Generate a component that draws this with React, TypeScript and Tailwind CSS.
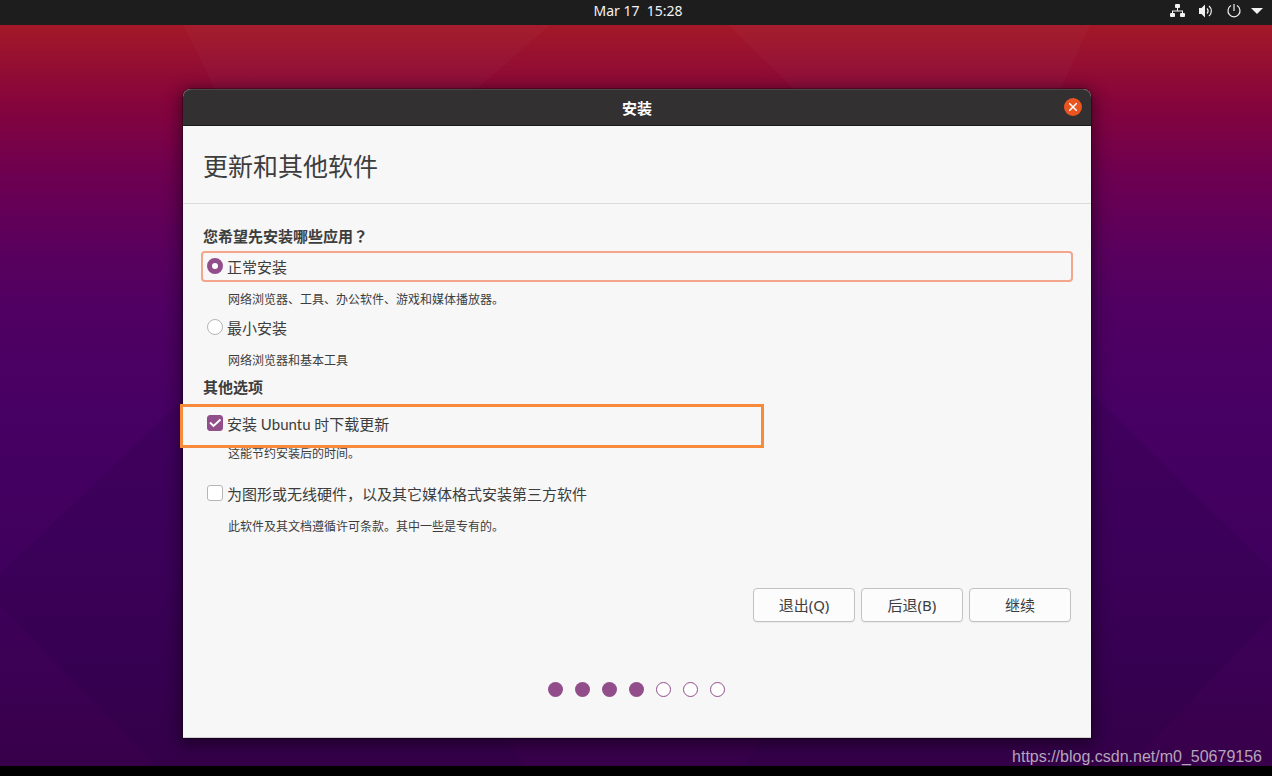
import { useState, type ReactNode } from "react";

const cjk = "font-['Noto_Sans','Noto_Sans_CJK_SC',sans-serif]";

function Wallpaper() {
  return (
    <svg
      aria-hidden="true"
      className="absolute inset-0 h-full w-full"
      viewBox="0 0 1272 741"
      preserveAspectRatio="none"
    >
      <defs>
        <linearGradient id="sky" x1="0" y1="0" x2="0" y2="1">
          <stop offset="0" stopColor="#a31828" />
          <stop offset="0.05" stopColor="#950f31" />
          <stop offset="0.1" stopColor="#87053b" />
          <stop offset="0.2" stopColor="#6e0050" />
          <stop offset="0.3" stopColor="#5a005d" />
          <stop offset="0.38" stopColor="#500062" />
          <stop offset="0.52" stopColor="#470063" />
          <stop offset="0.72" stopColor="#40005d" />
          <stop offset="0.88" stopColor="#3b0053" />
          <stop offset="1" stopColor="#38004a" />
        </linearGradient>
      </defs>
      <rect width="1272" height="741" fill="url(#sky)" />
      <path d="M183 0H550L470 70H218Z" fill="#ffffff" fillOpacity="0.025" />
      <path d="M728 0H1090L1058 70H800Z" fill="#ffffff" fillOpacity="0.025" />
      <path d="M0 549L200 358V741H157L0 581Z" fill="#1b0040" fillOpacity="0.14" />
      <path d="M1272 545L1080 357V741H1128L1272 592Z" fill="#1b0040" fillOpacity="0.14" />
      <path d="M200 700H500L524 741H200Z" fill="#1b0040" fillOpacity="0.14" />
      <path d="M770 700H1080V741H745Z" fill="#1b0040" fillOpacity="0.14" />
    </svg>
  );
}

function TopBar() {
  return (
    <header className="grid h-[25px] grid-cols-[1fr_auto_1fr] items-center bg-[#1d1d1d] pb-1 text-[#f2f2f2]">
      <span />
      <time className="pl-1 font-['Noto_Sans',sans-serif] text-sm leading-5 whitespace-pre">Mar 17  15:28</time>
      <div className="flex items-center justify-end gap-[9px] pr-[9px]">
        <div className="flex items-center gap-3">
          <svg width="16" height="16" viewBox="0 0 16 16" fill="currentColor" aria-label="网络" role="img">
            <rect x="5" y="1" width="5" height="4" rx="1" />
            <rect x="0" y="10" width="5" height="4" rx="1" />
            <rect x="10" y="10" width="5" height="4" rx="1" />
            <path d="M7 5h1v2.500h5V10h-1V8.500H3V10H2V7.500h5z" />
          </svg>
          <svg width="16" height="16" viewBox="0 0 16 16" fill="none" stroke="currentColor" aria-label="音量" role="img">
            <path d="M1 5h2.500L7 1.500v13L3.500 11H1z" fill="currentColor" stroke="none" />
            <path d="M9 5.500a3.500 3.500 0 0 1 0 5" strokeWidth="1.300" />
            <path d="M11 3a6.500 6.500 0 0 1 0 10" strokeWidth="1.200" />
          </svg>
          <svg width="16" height="16" viewBox="0 0 16 16" fill="none" stroke="currentColor" strokeWidth="1.200" aria-label="电源" role="img">
            <path d="M5 2.600a6 6 0 1 0 6 0M8 1v7" />
          </svg>
        </div>
        <svg width="12" height="6" viewBox="0 0 12 6" fill="currentColor" aria-hidden="true">
          <path d="M0 0h12L6 6z" />
        </svg>
      </div>
    </header>
  );
}

function Description({ children }: { children: ReactNode }) {
  return <p className="pl-[27px] text-xs leading-5">{children}</p>;
}

function RadioOption({ label, checked, onSelect }: { label: string; checked: boolean; onSelect: () => void }) {
  return (
    <label
      className={
        checked
          ? "flex h-[31px] items-center gap-1 rounded border-2 border-[#f3a68c] px-1"
          : "flex h-[31px] items-center gap-1 rounded border-2 border-transparent px-1"
      }
    >
      <input
        type="radio"
        name="apps"
        checked={checked}
        onChange={onSelect}
        className="mb-0.5 size-4 appearance-none rounded-full border border-[#b8b5b2] bg-white outline-none checked:border-[5px] checked:border-[#924d8b]"
      />
      <span>{label}</span>
    </label>
  );
}

function CheckOption({
  label,
  checked,
  onToggle,
  highlighted,
}: {
  label: ReactNode;
  checked: boolean;
  onToggle: () => void;
  highlighted?: boolean;
}) {
  return (
    <div className="relative">
      <label className="flex h-[31px] items-center gap-1 px-1.5">
        <span className="mb-0.5 grid">
          <input
            type="checkbox"
            checked={checked}
            onChange={onToggle}
            className="col-start-1 row-start-1 size-4 appearance-none rounded-[3px] border border-[#b8b5b2] bg-white checked:border-[#924d8b] checked:bg-[#924d8b]"
          />
          {checked && (
            <svg className="pointer-events-none col-start-1 row-start-1 size-4" viewBox="0 0 16 16" fill="none" stroke="#fff" strokeWidth="1.900">
              <path d="M3 7.500l3.500 3.500L13.500 4.500" />
            </svg>
          )}
        </span>
        <span>{label}</span>
      </label>
      {highlighted && (
        <div className="pointer-events-none absolute -top-1 -left-[21px] h-[44px] w-[584px] max-w-full border-[3px] border-[#f88a3b]" />
      )}
    </div>
  );
}

function DialogButton({ children }: { children: ReactNode }) {
  return (
    <button
      type="button"
      className="h-[34px] w-[102px] rounded border border-[#c4c2c0] bg-[#fcfcfc] shadow-[0_1px_1px_rgba(0,0,0,0.06)]"
    >
      {children}
    </button>
  );
}

function InstallerWindow() {
  const [apps, setApps] = useState("normal");
  const [updates, setUpdates] = useState(true);
  const [thirdParty, setThirdParty] = useState(false);
  const steps = 7;
  const current = 4;

  return (
    <section className="w-full max-w-[908px] rounded-t-lg bg-[#f7f7f7] text-[15px] leading-5 text-[#3d3d3d] shadow-[0_3px_16px_3px_rgba(0,0,0,0.45),0_0_0_1px_rgba(0,0,0,0.3)]">
      <div className="grid h-[37px] grid-cols-[1fr_auto_1fr] items-center rounded-t-lg border-t border-b border-t-[#4a4848] border-b-[#1c1b1b] bg-[#323030] px-[9px] pb-0.5">
        <span />
        <h1 className="pt-0.5 font-bold text-white">安装</h1>
        <button type="button" aria-label="关闭" className="flex size-[18px] items-center justify-center justify-self-end rounded-full bg-[#e95420]">
          <svg width="8" height="8" viewBox="0 0 8 8" stroke="#fff" strokeWidth="1.500" aria-hidden="true">
            <path d="M0 0l8 8M8 0l-8 8" />
          </svg>
        </button>
      </div>
      <div className="flex h-[78px] items-center border-b border-[#dcdcdc] px-5 pt-0.5">
        <h2 className="text-[25px] leading-9">更新和其他软件</h2>
      </div>
      <form className="border-b border-[#d5d0cd] px-[18px] pt-[22px] pb-10" onSubmit={(e) => e.preventDefault()}>
        <h3 className="pl-0.5 font-bold">
          您希望先安装哪些应用<span lang="zh-TW" className="font-['Noto_Sans_CJK_TC',sans-serif] leading-none">？</span>
        </h3>
        <div className="mt-[5px] flex flex-col gap-2">
          <RadioOption label="正常安装" checked={apps === "normal"} onSelect={() => setApps("normal")} />
          <Description>网络浏览器、工具、办公软件、游戏和媒体播放器。</Description>
        </div>
        <div className="mt-0.5 flex flex-col gap-2">
          <RadioOption label="最小安装" checked={apps === "minimal"} onSelect={() => setApps("minimal")} />
          <Description>网络浏览器和基本工具</Description>
        </div>
        <h3 className="mt-1.5 pl-0.5 font-bold">其他选项</h3>
        <div className="mt-[11px] flex flex-col gap-[5px]">
          <CheckOption
            label={
              <>
                安装<span className="font-['Lato',sans-serif] leading-none"> Ubuntu </span>时下载更新
              </>
            }
            checked={updates}
            onToggle={() => setUpdates(!updates)}
            highlighted
          />
          <Description>这能节约安装后的时间。</Description>
        </div>
        <div className="mt-3.5 flex flex-col gap-2">
          <CheckOption
            label="为图形或无线硬件，以及其它媒体格式安装第三方软件"
            checked={thirdParty}
            onToggle={() => setThirdParty(!thirdParty)}
          />
          <Description>此软件及其文档遵循许可条款。其中一些是专有的。</Description>
        </div>
        <div className="mt-[51px] flex justify-end gap-1.5 pr-0.5">
          <DialogButton>退出(Q)</DialogButton>
          <DialogButton>后退(B)</DialogButton>
          <DialogButton>继续</DialogButton>
        </div>
        <div className="mt-[60px] flex justify-center gap-3 pr-0.5">
          {Array.from({ length: steps }, (_, i) => (
            <span
              key={i}
              className={
                i < current
                  ? "size-[15px] rounded-full bg-[#924d8b]"
                  : "size-[15px] rounded-full border border-[#924d8b] bg-white"
              }
            />
          ))}
        </div>
      </form>
    </section>
  );
}

export default function App() {
  return (
    <div lang="zh-CN" className={`flex min-h-screen flex-col bg-black ${cjk}`}>
      <TopBar />
      <main className="relative flex-1 overflow-hidden">
        <Wallpaper />
        <div className="relative flex justify-center pt-16 pb-2.5 pl-0.5">
          <InstallerWindow />
        </div>
        <div className="relative flex justify-end pr-2.5 font-['Liberation_Sans',sans-serif] text-base leading-[18px] text-[#b5a5ba]">
          <a href="https://blog.csdn.net/m0_50679156">https://blog.csdn.net/m0_50679156</a>
        </div>
      </main>
      <footer className="h-2.5 bg-black" />
    </div>
  );
}
